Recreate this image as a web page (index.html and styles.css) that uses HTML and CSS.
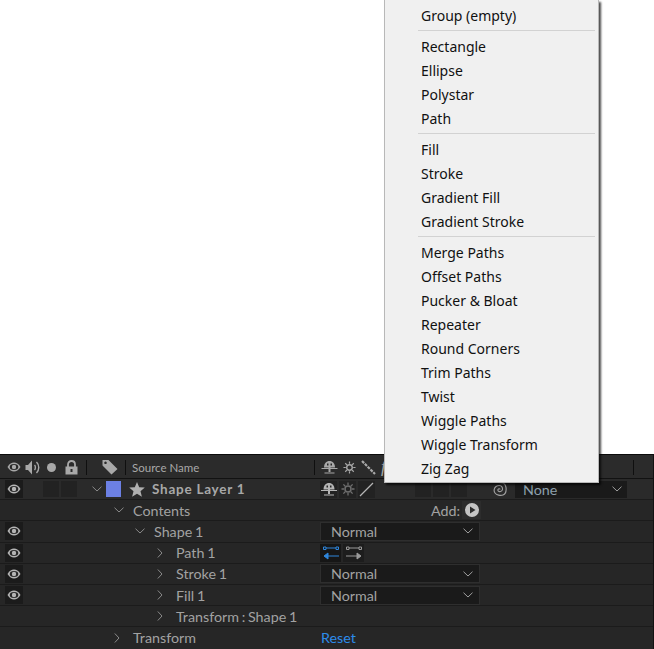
FILE: index.html
```html
<!DOCTYPE html>
<html lang="en">
<head>
  <meta charset="UTF-8" />
  <title>Shape Layer Add Menu</title>
  <link rel="stylesheet" href="styles.css">
</head>
<body>
  <svg class="defs" width="0" height="0">
    <symbol id="eye" viewBox="0 0 14 10">
      <path d="M0.5 5C2.5 1.8 4.6 0.6 7 0.6S11.500 1.800 13.500 5C11.500 8.200 9.400 9.400 7 9.400S2.500 8.200 0.500 5Z" fill="currentColor"/>
      <ellipse cx="7" cy="5" rx="4.300" ry="3" fill="#262626"/>
      <circle cx="7" cy="5" r="2.200" fill="currentColor"/>
    </symbol>
    <symbol id="shy" viewBox="0 0 16 16">
      <path d="M2.500 8.500C2.500 4.500 4.800 2 8 2S13.500 4.500 13.500 8.500Z" fill="currentColor"/>
      <rect x="5.500" y="4.500" width="1.500" height="2" fill="#262626"/>
      <rect x="9" y="4.500" width="1.500" height="2" fill="#262626"/>
      <rect x="7" y="8" width="2" height="5" fill="currentColor"/>
      <rect x="0" y="9" width="16" height="1" fill="currentColor"/>
      <rect x="3" y="13.500" width="10" height="1" fill="currentColor"/>
    </symbol>
    <symbol id="sun" viewBox="0 0 14 14">
      <circle cx="7" cy="7" r="3" fill="none" stroke="currentColor" stroke-width="1.500"/>
      <path d="M7 0.500V3M7 11V13.500M0.500 7H3M11 7H13.500M2.400 2.400L4.200 4.200M9.800 9.800L11.600 11.600M11.600 2.400L9.800 4.200M4.200 9.800L2.400 11.600" stroke="currentColor" stroke-width="1.300"/>
    </symbol>
    <symbol id="chev-down" viewBox="0 0 10 6">
      <path d="M0.500 0.700L5 5L9.500 0.700" fill="none" stroke="currentColor" stroke-width="1"/>
    </symbol>
    <symbol id="chev-right" viewBox="0 0 6 10">
      <path d="M0.800 0.500L5 5L0.800 9.500" fill="none" stroke="currentColor" stroke-width="1"/>
    </symbol>
  </svg>

  <div class="canvas"></div>

  <div class="timeline">
    <div class="header">
      <div class="header-left">
        <svg class="ic-eye" width="14" height="10"><use href="#eye"/></svg>
        <svg class="ic-speaker" width="16" height="17" viewBox="0 0 16 16">
          <path d="M0.500 5.500H3L7 1V15L3 10.500H0.500Z" fill="currentColor"/>
          <path d="M9.500 5.500C10.700 6.700 10.700 9.300 9.500 10.500M11.500 2.500C14.500 5.500 14.500 10.500 11.500 13.500" fill="none" stroke="currentColor" stroke-width="1.400"/>
        </svg>
        <span class="ic-dot"></span>
        <svg class="ic-lock" width="13" height="15" viewBox="0 0 13 15">
          <path d="M3 7V4.500C3 2.500 4.500 1 6.500 1S10 2.500 10 4.500V7" fill="none" stroke="currentColor" stroke-width="1.800"/>
          <path d="M0.500 6.500H12.500V14.500H0.500ZM5.500 9V12H7.500V9Z" fill="currentColor" fill-rule="evenodd"/>
        </svg>
        <span class="sep sep-a"></span>
        <svg class="ic-tag" width="16" height="16" viewBox="0 0 16 16">
          <path d="M0.500 1H6.500L15.500 10L9.500 15.500L0.500 6.500ZM3.500 2.500A1.300 1.300 0 1 0 3.510 2.500Z" fill="currentColor" fill-rule="evenodd"/>
        </svg>
        <span class="sep sep-b"></span>
        <span class="source-name">Source Name</span>
      </div>
      <span class="sep sep-c"></span>
      <div class="header-switches">
        <svg width="17" height="16"><use href="#shy"/></svg>
        <svg width="13" height="13"><use href="#sun"/></svg>
        <svg width="15" height="15" viewBox="0 0 15 15"><path d="M1 1L14 14" stroke="currentColor" stroke-width="2.200" stroke-dasharray="3 1"/></svg>
        <span class="fx">f</span>
      </div>
      <span class="sep sep-d"></span>
    </div>

    <div class="row row-layer">
      <div class="name">
        <span class="eye-cell"><svg width="14" height="10"><use href="#eye"/></svg></span>
        <span class="blank-box box-first"></span>
        <span class="blank-box"></span>
        <svg class="layer-chev" width="10" height="6"><use href="#chev-down"/></svg>
        <span class="swatch"></span>
        <svg class="star" width="16" height="15" viewBox="0 0 16 15">
          <path d="M8 0L10.200 5.200L15.800 5.600L11.500 9.200L12.900 14.800L8 11.800L3.100 14.800L4.500 9.200L0.200 5.600L5.800 5.200Z" fill="currentColor"/>
        </svg>
        <span class="layer-title">Shape Layer 1</span>
      </div>
      <div class="switches">
        <span class="sw"><svg width="16" height="16"><use href="#shy"/></svg></span>
        <span class="sw dim"><svg width="14" height="14"><use href="#sun"/></svg></span>
        <span class="sw"><svg width="15" height="15" viewBox="0 0 15 15"><path d="M1 14L14 1" stroke="currentColor" stroke-width="1.300"/></svg></span>
        <span class="blank-box box-mode"></span>
        <span class="blank-box"></span>
        <span class="blank-box"></span>
        <svg class="spiral" width="15" height="15" viewBox="0 0 15 15">
          <path d="M8 7.500C8 6.500 6.500 6.500 6 7.500S6.500 10 8.500 9.500S11 7 10 5S6 3 4 4.500S1.500 9 3 11S8.500 14 11 13S14.500 9.500 14 5.500S10 .5 7.500 .7" fill="none" stroke="currentColor" stroke-width="1.100"/>
        </svg>
        <span class="select select-none"><span>None</span><svg width="10" height="6"><use href="#chev-down"/></svg></span>
      </div>
    </div>

    <div class="row">
      <div class="name">
        <span class="eye-space"></span>
        <div class="tree tree-1"><svg class="chev-d" width="10" height="6"><use href="#chev-down"/></svg><span>Contents</span></div>
      </div>
      <div class="switches add-wrap">
        <span class="add-label">Add:</span>
        <span class="add-btn"><svg width="14" height="14" viewBox="0 0 14 14"><path d="M7 0A7 7 0 1 1 7 14A7 7 0 1 1 7 0ZM5 3.500V10.500L10.500 7Z" fill="currentColor" fill-rule="evenodd"/></svg></span>
      </div>
    </div>

    <div class="row">
      <div class="name">
        <span class="eye-cell"><svg width="14" height="10"><use href="#eye"/></svg></span>
        <div class="tree tree-2"><svg class="chev-d" width="10" height="6"><use href="#chev-down"/></svg><span>Shape 1</span></div>
      </div>
      <div class="switches">
        <span class="select"><span>Normal</span><svg width="10" height="6"><use href="#chev-down"/></svg></span>
      </div>
    </div>

    <div class="row">
      <div class="name">
        <span class="eye-cell"><svg width="14" height="10"><use href="#eye"/></svg></span>
        <div class="tree tree-3"><svg class="chev-r" width="6" height="10"><use href="#chev-right"/></svg><span>Path 1</span></div>
      </div>
      <div class="switches">
        <span class="dir-btn dir-on">
          <svg width="18" height="14" viewBox="0 0 18 14">
            <path d="M1.500 1H4V3.500H1.500ZM14 1H16.500V3.500H14Z" fill="none" stroke="currentColor"/>
            <path d="M4 2H14" stroke="currentColor"/>
            <path d="M17 10H3M6 7L2 10L6 13Z" fill="currentColor" stroke="currentColor"/>
          </svg>
        </span>
        <span class="dir-btn">
          <svg width="18" height="14" viewBox="0 0 18 14">
            <path d="M1.500 1H4V3.500H1.500ZM14 1H16.500V3.500H14Z" fill="none" stroke="currentColor"/>
            <path d="M4 2H14" stroke="currentColor"/>
            <path d="M1 10H15M12 7L16 10L12 13Z" fill="currentColor" stroke="currentColor"/>
          </svg>
        </span>
      </div>
    </div>

    <div class="row">
      <div class="name">
        <span class="eye-cell"><svg width="14" height="10"><use href="#eye"/></svg></span>
        <div class="tree tree-3"><svg class="chev-r" width="6" height="10"><use href="#chev-right"/></svg><span>Stroke 1</span></div>
      </div>
      <div class="switches">
        <span class="select"><span>Normal</span><svg width="10" height="6"><use href="#chev-down"/></svg></span>
      </div>
    </div>

    <div class="row">
      <div class="name">
        <span class="eye-cell"><svg width="14" height="10"><use href="#eye"/></svg></span>
        <div class="tree tree-3"><svg class="chev-r" width="6" height="10"><use href="#chev-right"/></svg><span>Fill 1</span></div>
      </div>
      <div class="switches">
        <span class="select"><span>Normal</span><svg width="10" height="6"><use href="#chev-down"/></svg></span>
      </div>
    </div>

    <div class="row">
      <div class="name">
        <span class="eye-space"></span>
        <div class="tree tree-3"><svg class="chev-r" width="6" height="10"><use href="#chev-right"/></svg><span>Transform : Shape 1</span></div>
      </div>
      <div class="switches"></div>
    </div>

    <div class="row row-last">
      <div class="name">
        <span class="eye-space"></span>
        <div class="tree tree-1"><svg class="chev-r" width="6" height="10"><use href="#chev-right"/></svg><span>Transform</span></div>
      </div>
      <div class="switches"><span class="reset">Reset</span></div>
    </div>
  </div>

  <div class="menu">
    <div class="menu-item">Group (empty)</div>
    <div class="menu-sep"></div>
    <div class="menu-item">Rectangle</div>
    <div class="menu-item">Ellipse</div>
    <div class="menu-item">Polystar</div>
    <div class="menu-item">Path</div>
    <div class="menu-sep"></div>
    <div class="menu-item">Fill</div>
    <div class="menu-item">Stroke</div>
    <div class="menu-item">Gradient Fill</div>
    <div class="menu-item">Gradient Stroke</div>
    <div class="menu-sep"></div>
    <div class="menu-item">Merge Paths</div>
    <div class="menu-item">Offset Paths</div>
    <div class="menu-item">Pucker &amp; Bloat</div>
    <div class="menu-item">Repeater</div>
    <div class="menu-item">Round Corners</div>
    <div class="menu-item">Trim Paths</div>
    <div class="menu-item">Twist</div>
    <div class="menu-item">Wiggle Paths</div>
    <div class="menu-item">Wiggle Transform</div>
    <div class="menu-item">Zig Zag</div>
  </div>
</body>
</html>
```

FILE: styles.css
```css
html, body {
  margin: 0;
  padding: 0;
  height: 649px;
  overflow: hidden;
  background: #fff;
}
body {
  position: relative;
  font-family: Lato, "Liberation Sans", sans-serif;
}
.defs {
  position: absolute;
}
svg {
  display: block;
  flex: none;
}
.canvas {
  height: 454px;
  background: #fff;
}

/* timeline panel */
.timeline {
  height: 195px;
  background: #262626;
  color: #a2a2a2;
  font-size: 14.3px;
  border-top: 1px solid #0c0c0c;
  border-right: 1px solid #121212;
  box-sizing: border-box;
}
.header {
  height: 24px;
  box-sizing: border-box;
  display: flex;
  align-items: center;
  padding-top: 1px;
  background: #2b2b2b;
  border-bottom: 1px solid #121212;
  color: #a8a8a8;
}
.header-left {
  width: 314px;
  display: flex;
  align-items: center;
  padding-left: 7px;
  box-sizing: border-box;
}
.ic-speaker {
  margin-left: 4px;
}
.ic-dot {
  width: 9px;
  height: 9px;
  border-radius: 50%;
  background: #a8a8a8;
  margin-left: 6px;
}
.ic-lock {
  margin-left: 9px;
}
.sep {
  width: 1px;
  height: 15px;
  background: #0f0f0f;
  flex: none;
}
.sep-a {
  margin-left: 8px;
}
.ic-tag {
  margin-left: 15px;
}
.sep-b {
  margin-left: 7px;
}
.source-name {
  margin-left: 6px;
  font-size: 11.5px;
}
.header-switches {
  width: 318px;
  display: flex;
  align-items: center;
  gap: 5px;
  padding-left: 6px;
  box-sizing: border-box;
}
.fx {
  font-family: "Liberation Serif", serif;
  font-style: italic;
  font-size: 17px;
  color: #a8a8a8;
}

.row {
  height: 21.2px;
  box-sizing: border-box;
  display: flex;
  align-items: center;
  border-bottom: 1px solid #1b1b1b;
}
.row-layer {
  background: #2a2a2a;
}
.row-last {
  border-bottom: 0;
}
.name {
  width: 320px;
  flex: none;
  display: flex;
  align-items: center;
  padding-left: 5px;
  box-sizing: border-box;
}
.eye-cell {
  width: 18px;
  height: 18px;
  background: #1b1b1b;
  display: flex;
  align-items: center;
  justify-content: center;
  color: #b5b5b5;
  flex: none;
}
.eye-space {
  width: 18px;
  flex: none;
}
.blank-box {
  width: 16px;
  height: 16px;
  background: #222;
  margin-left: 2px;
  flex: none;
}
.box-first {
  margin-left: 20px;
}
.layer-chev {
  margin-left: 15px;
  color: #8a8a8a;
}
.swatch {
  width: 15px;
  height: 16px;
  background: #6c80e4;
  margin-left: 4px;
}
.star {
  margin-left: 8px;
  color: #b0b0b0;
}
.layer-title {
  margin-left: 7px;
  font-weight: 700;
  font-size: 13.5px;
  letter-spacing: 0.75px;
  color: #a8a8a8;
}

.tree {
  display: flex;
  align-items: center;
  word-spacing: -1px;
}
.tree-1 {
  padding-left: 89px;
}
.tree-2 {
  padding-left: 110px;
}
.tree-3 {
  padding-left: 132px;
}
.chev-d {
  margin-right: 9px;
  margin-left: 2px;
  color: #8a8a8a;
}
.chev-r {
  margin-right: 13px;
  margin-left: 2px;
  color: #8a8a8a;
}

.switches {
  flex: 1;
  display: flex;
  align-items: center;
  min-width: 0;
}
.sw {
  width: 17px;
  height: 17px;
  background: #222;
  margin-right: 2px;
  display: flex;
  align-items: center;
  justify-content: center;
  color: #b5b5b5;
}
.dim {
  color: #6f6f6f;
}
.box-mode {
  margin-left: 38px;
}
.spiral {
  margin-left: 25px;
  color: #a0a0a0;
}
.select {
  width: 160px;
  height: 19px;
  box-sizing: border-box;
  background: #1a1a1a;
  border: 1px solid #2e2e2e;
  display: flex;
  align-items: center;
  justify-content: space-between;
  padding: 0 6px 0 10px;
  color: #a2a2a2;
}
.select svg {
  color: #a0a0a0;
}
.select-none {
  width: 112px;
  height: 17px;
  margin-left: 8px;
  border: 0;
  padding: 0 5px 0 8px;
  color: #8ea0ad;
}
.add-wrap {
  padding-left: 111px;
}
.add-label {
  width: 31px;
}
.add-btn {
  width: 19px;
  height: 18px;
  background: #2c2c2c;
  display: flex;
  align-items: center;
  justify-content: center;
  color: #c4c4c4;
}
.dir-btn {
  width: 21px;
  height: 18px;
  background: #1d1d1d;
  margin-right: 2px;
  display: flex;
  align-items: center;
  justify-content: center;
  color: #9a9a9a;
}
.dir-on {
  background: #161616;
  color: #2f86dc;
}
.reset {
  margin-left: 1px;
  color: #2d8ceb;
}

/* add menu */
.menu {
  position: absolute;
  left: 384px;
  top: 0;
  width: 215px;
  height: 483px;
  box-sizing: border-box;
  padding: 4px 2px 0 2px;
  background: #f0f0f0;
  border: 1px solid #b8b8b8;
  border-top: 0;
  box-shadow: 2px 2px 2px rgba(0, 0, 0, 0.7);
  font-family: "Noto Sans", "Open Sans", sans-serif;
  font-size: 14px;
  color: #111;
}
.menu-item {
  height: 24px;
  line-height: 24px;
  padding-left: 34px;
}
.menu-sep {
  height: 1px;
  margin: 2px 1px 4px 31px;
  background: #d2d2d2;
}
```
